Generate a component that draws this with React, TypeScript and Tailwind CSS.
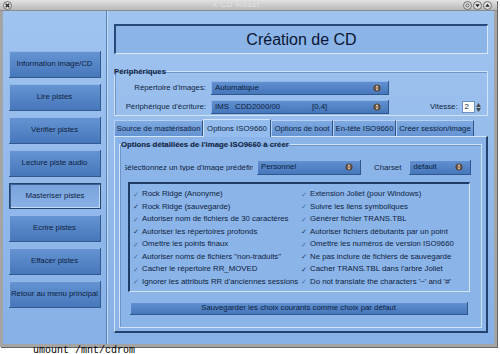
import React from "react";

const navButtons = [
  "Information image/CD",
  "Lire pistes",
  "Vérifier pistes",
  "Lecture piste audio",
  "Masteriser pistes",
  "Ecrire pistes",
  "Effacer pistes",
  "Retour au menu principal",
];

const tabs = [
  { label: "Source de mastérisation", w: "w-[89px]" },
  { label: "Options ISO9660", w: "w-[68px]", active: true },
  { label: "Options de boot", w: "w-[62px]" },
  { label: "En-tête ISO9660", w: "w-[63px]" },
  { label: "Créer session/image", w: "w-[78px]" },
];

const leftOptions = [
  { label: "Rock Ridge (Anonyme)", on: false },
  { label: "Rock Ridge (sauvegarde)", on: true },
  { label: "Autoriser nom de fichiers de 30 caractères", on: false },
  { label: "Autoriser les répertoires profonds", on: true },
  { label: "Omettre les points finaux", on: false },
  { label: 'Autoriser noms de fichiers "non-traduits"', on: false },
  { label: "Cacher le répertoire RR_MOVED", on: false },
  { label: "Ignorer les attributs RR d'anciennes sessions", on: false },
];

const rightOptions = [
  { label: "Extension Joliet (pour Windows)", on: false },
  { label: "Suivre les liens symboliques", on: false },
  { label: "Générer fichier TRANS.TBL", on: false },
  { label: "Autoriser fichiers débutants par un point", on: true },
  { label: "Omettre les numéros de version ISO9660", on: false },
  { label: "Ne pas inclure de fichiers de sauvegarde", on: true },
  { label: "Cacher TRANS.TBL dans l'arbre Joliet", on: true },
  { label: "Do not translate the characters '~' and '#'", on: false },
];

function ComboArrow() {
  return (
    <svg width="8" height="8" viewBox="0 0 8 8" className="shrink-0">
      <circle cx="4" cy="4" r="3.6" fill="#5a4a3c" />
      <path d="M4 1.3 5.6 3.5H2.4Z M4 6.7 5.6 4.5H2.4Z" fill="#e9d9bf" />
    </svg>
  );
}

function WinButton({ kind }: { kind: "close" | "dot" | "down" | "up" }) {
  return (
    <svg width="9" height="9" viewBox="0 0 9 9">
      <circle cx="4.5" cy="4.5" r="4" fill="#e0e0e0" stroke="#555" strokeWidth="0.8" />
      {kind === "close" && <path d="M2.7 2.7 6.3 6.3 M6.3 2.7 2.7 6.3" stroke="#222" strokeWidth="1.3" />}
      {kind === "dot" && <circle cx="4.5" cy="4.5" r="1.6" fill="none" stroke="#444" strokeWidth="0.8" />}
      {kind === "down" && <path d="M2.3 3.2H6.7L4.5 6.2Z" fill="#222" />}
      {kind === "up" && <path d="M2.3 5.8H6.7L4.5 2.8Z" fill="#222" />}
    </svg>
  );
}

function OptionRow({ label, on }: { label: string; on: boolean }) {
  return (
    <div className="flex h-[12.5px] items-center gap-[3px] whitespace-nowrap">
      <span className={on ? "w-[6px] text-[7px] text-[#1c3762]" : "w-[6px] text-[7px] text-[#4c6f9f]"}>✓</span>
      <span>{label}</span>
    </div>
  );
}

export default function App() {
  return (
    <div className="h-[354px] w-[500px] overflow-hidden bg-white font-['Liberation_Sans',Arial,sans-serif] text-[7.8px] leading-none text-[#0d1e40]">
      <div className="flex h-[347px] w-[497px] flex-col border-x-[3px] border-b-[3px] border-[#a4a4a4] shadow-[1px_1px_0_#666]">
        {/* title bar */}
        <div className="relative -mx-[3px] flex h-[11px] items-center justify-between border-b border-[#8c8c8c] bg-[linear-gradient(180deg,#e2e2e2,#b8b8b8)] px-[3px]">
          <WinButton kind="close" />
          <span className="absolute left-[212px] top-[1px] text-[8px] tracking-[0.5px] text-[#ececec] [text-shadow:0_0_1px_#b0b0b0]">X CD Roast</span>
          <div className="mr-[2px] flex gap-[1px]">
            <WinButton kind="dot" />
            <WinButton kind="down" />
            <WinButton kind="up" />
          </div>
        </div>

        <div className="flex flex-1 bg-[linear-gradient(180deg,#a0c4f0,#86b0e6)]">
          {/* left navigation */}
          <aside className="flex w-[104px] flex-col gap-[6px] border-r border-[#5580b9] pl-[6px] pt-[40px] shadow-[1px_0_0_#c7ddf7]">
            {navButtons.map((b) =>
              b === "Masteriser pistes" ? (
                <div
                  key={b}
                  className="flex h-[26px] w-[92px] items-center justify-center border border-[#24436d] bg-[linear-gradient(180deg,#77a2db,#8ab2e7)] shadow-[inset_1px_1px_0_#3d5f90,inset_-1px_-1px_0_#c4dbf6]"
                >
                  {b}
                </div>
              ) : (
                <div
                  key={b}
                  className="flex h-[27px] w-[92px] items-center justify-center whitespace-nowrap border-b border-r border-[#33598f] bg-[linear-gradient(180deg,#6795d3,#4677bb)] shadow-[inset_1px_1px_0_#93b8ea]"
                >
                  {b}
                </div>
              )
            )}
          </aside>

          {/* main area */}
          <main className="flex flex-1 flex-col pl-[7px] pr-[6px] pt-[13px]">
            <div className="flex h-[30px] items-center justify-center border-l-2 border-t-2 border-b border-r border-b-[#d6e7fb] border-l-[#27497a] border-r-[#d6e7fb] border-t-[#27497a] bg-[#8bb4e8] text-[16px] text-[#0a1633]">
              Création de CD
            </div>

            <fieldset className="mt-[13px] h-[49px] border border-[#d2e3f8] shadow-[inset_1px_1px_0_#6f95c6]">
              <legend className="-ml-[1px] h-[9px] pr-[1px] text-[7.8px] font-bold leading-[9px]">Périphériques</legend>
              <div className="mt-[5px] flex h-[14px] items-center">
                <span className="w-[91px] whitespace-nowrap text-right">Répertoire d'images:</span>
                <div className="ml-[5px] flex h-[14px] w-[178px] items-center justify-between border-b border-r border-[#2f5890] bg-[linear-gradient(180deg,#6392d2,#4677bb)] pl-[4px] pr-[7px] shadow-[inset_1px_1px_0_#8fb6ea]">
                  <span>Automatique</span>
                  <ComboArrow />
                </div>
              </div>
              <div className="mt-[5px] flex h-[14px] items-center">
                <span className="w-[91px] whitespace-nowrap text-right">Périphérique d'écriture:</span>
                <div className="ml-[5px] flex h-[14px] w-[178px] items-center justify-between border-b border-r border-[#2f5890] bg-[linear-gradient(180deg,#6392d2,#4677bb)] pl-[4px] pr-[7px] shadow-[inset_1px_1px_0_#8fb6ea]">
                  <span className="flex whitespace-pre">
                    <span className="w-[20px]">IMS</span>
                    <span className="w-[77px]">CDD2000/00</span>
                    <span>[0,4]</span>
                  </span>
                  <ComboArrow />
                </div>
                <span className="ml-[41px]">Vitesse:</span>
                <div className="ml-[4px] flex h-[14px] items-center">
                  <div className="flex h-[12px] w-[13px] items-center border border-[#6d8fbf] bg-white pl-[2px]">2</div>
                  <div className="flex h-[12px] w-[7px] flex-col items-center justify-center gap-[1px]">
                    <svg width="5" height="4" viewBox="0 0 5 4"><path d="M0 4H5L2.5 0Z" fill="#4a4a4a" /></svg>
                    <svg width="5" height="4" viewBox="0 0 5 4"><path d="M0 0H5L2.5 4Z" fill="#4a4a4a" /></svg>
                  </div>
                </div>
              </div>
            </fieldset>

            {/* tabs */}
            <div className="mt-[4px] flex h-[16px] items-end">
              {tabs.map((t) =>
                t.active ? (
                  <div
                    key={t.label}
                    className={`${t.w} relative z-10 -mb-[1px] flex h-[18px] items-center justify-center whitespace-nowrap border-l border-r border-t border-l-[#d4e5fa] border-r-[#2e5488] border-t-[#d4e5fa] bg-[#94bcee]`}
                  >
                    {t.label}
                  </div>
                ) : (
                  <div
                    key={t.label}
                    className={`${t.w} flex h-[16px] items-center justify-center overflow-hidden whitespace-nowrap border-l border-r border-t border-l-[#b5d0f3] border-r-[#2e5488] border-t-[#b5d0f3] bg-[linear-gradient(180deg,#7ea9e2,#6593d2)]`}
                  >
                    {t.label}
                  </div>
                )
              )}
            </div>

            <div className="h-[197px] border-b-2 border-l border-r-2 border-t border-b-[#22426d] border-l-[#d4e5fa] border-r-[#22426d] border-t-[#d4e5fa] bg-[#8bb4e8] px-[4px] pt-[3px]">
              <fieldset className="h-[188px] border border-[#d2e3f8] shadow-[inset_1px_1px_0_#6f95c6]">
                <legend className="ml-[1px] h-[9px] pr-[1px] text-[7.8px] font-bold leading-[9px]">
                  Options détaillées de l'image ISO9660 à créer
                </legend>
                <div className="mt-[11px] flex h-[15px] items-center">
                  <div className="ml-[5px] flex w-[128px] justify-center overflow-hidden whitespace-nowrap">
                    <span className="shrink-0">Sélectionnez un type d'image prédéfini</span>
                  </div>
                  <div className="ml-[4px] flex h-[15px] w-[104px] items-center justify-between border-b border-r border-[#2f5890] bg-[linear-gradient(180deg,#6392d2,#4677bb)] pl-[4px] pr-[7px] shadow-[inset_1px_1px_0_#8fb6ea]">
                    <span>Personnel</span>
                    <ComboArrow />
                  </div>
                  <span className="ml-[13px]">Charset</span>
                  <div className="ml-[8px] flex h-[15px] w-[62px] items-center justify-between border-b border-r border-[#2f5890] bg-[linear-gradient(180deg,#6392d2,#4677bb)] pl-[4px] pr-[7px] shadow-[inset_1px_1px_0_#8fb6ea]">
                    <span>default</span>
                    <ComboArrow />
                  </div>
                </div>

                <div className="ml-[8px] mt-[7px] flex h-[110px] w-[342px] border-b border-l-2 border-r border-t-2 border-b-[#d2e3f8] border-l-[#1f3c66] border-r-[#d2e3f8] border-t-[#1f3c66] pl-[3px] pt-[4px]">
                  <div className="flex w-[168px] flex-col">
                    {leftOptions.map((o) => (
                      <OptionRow key={o.label} label={o.label} on={o.on} />
                    ))}
                  </div>
                  <div className="flex flex-col">
                    {rightOptions.map((o) => (
                      <OptionRow key={o.label} label={o.label} on={o.on} />
                    ))}
                  </div>
                </div>

                <div className="ml-[10px] mt-[10px] flex h-[13px] w-[338px] items-center justify-center border-b border-r border-[#2f5890] bg-[linear-gradient(180deg,#6392d2,#4677bb)] shadow-[inset_1px_1px_0_#8fb6ea]">
                  Sauvegarder les choix courants comme choix par défaut
                </div>
              </fieldset>
            </div>
          </main>
        </div>
      </div>
      <div className="h-[7px] pl-[33px] font-['Liberation_Mono',monospace] text-[10px] leading-[7px] text-black">umount /mnt/cdrom</div>
    </div>
  );
}
